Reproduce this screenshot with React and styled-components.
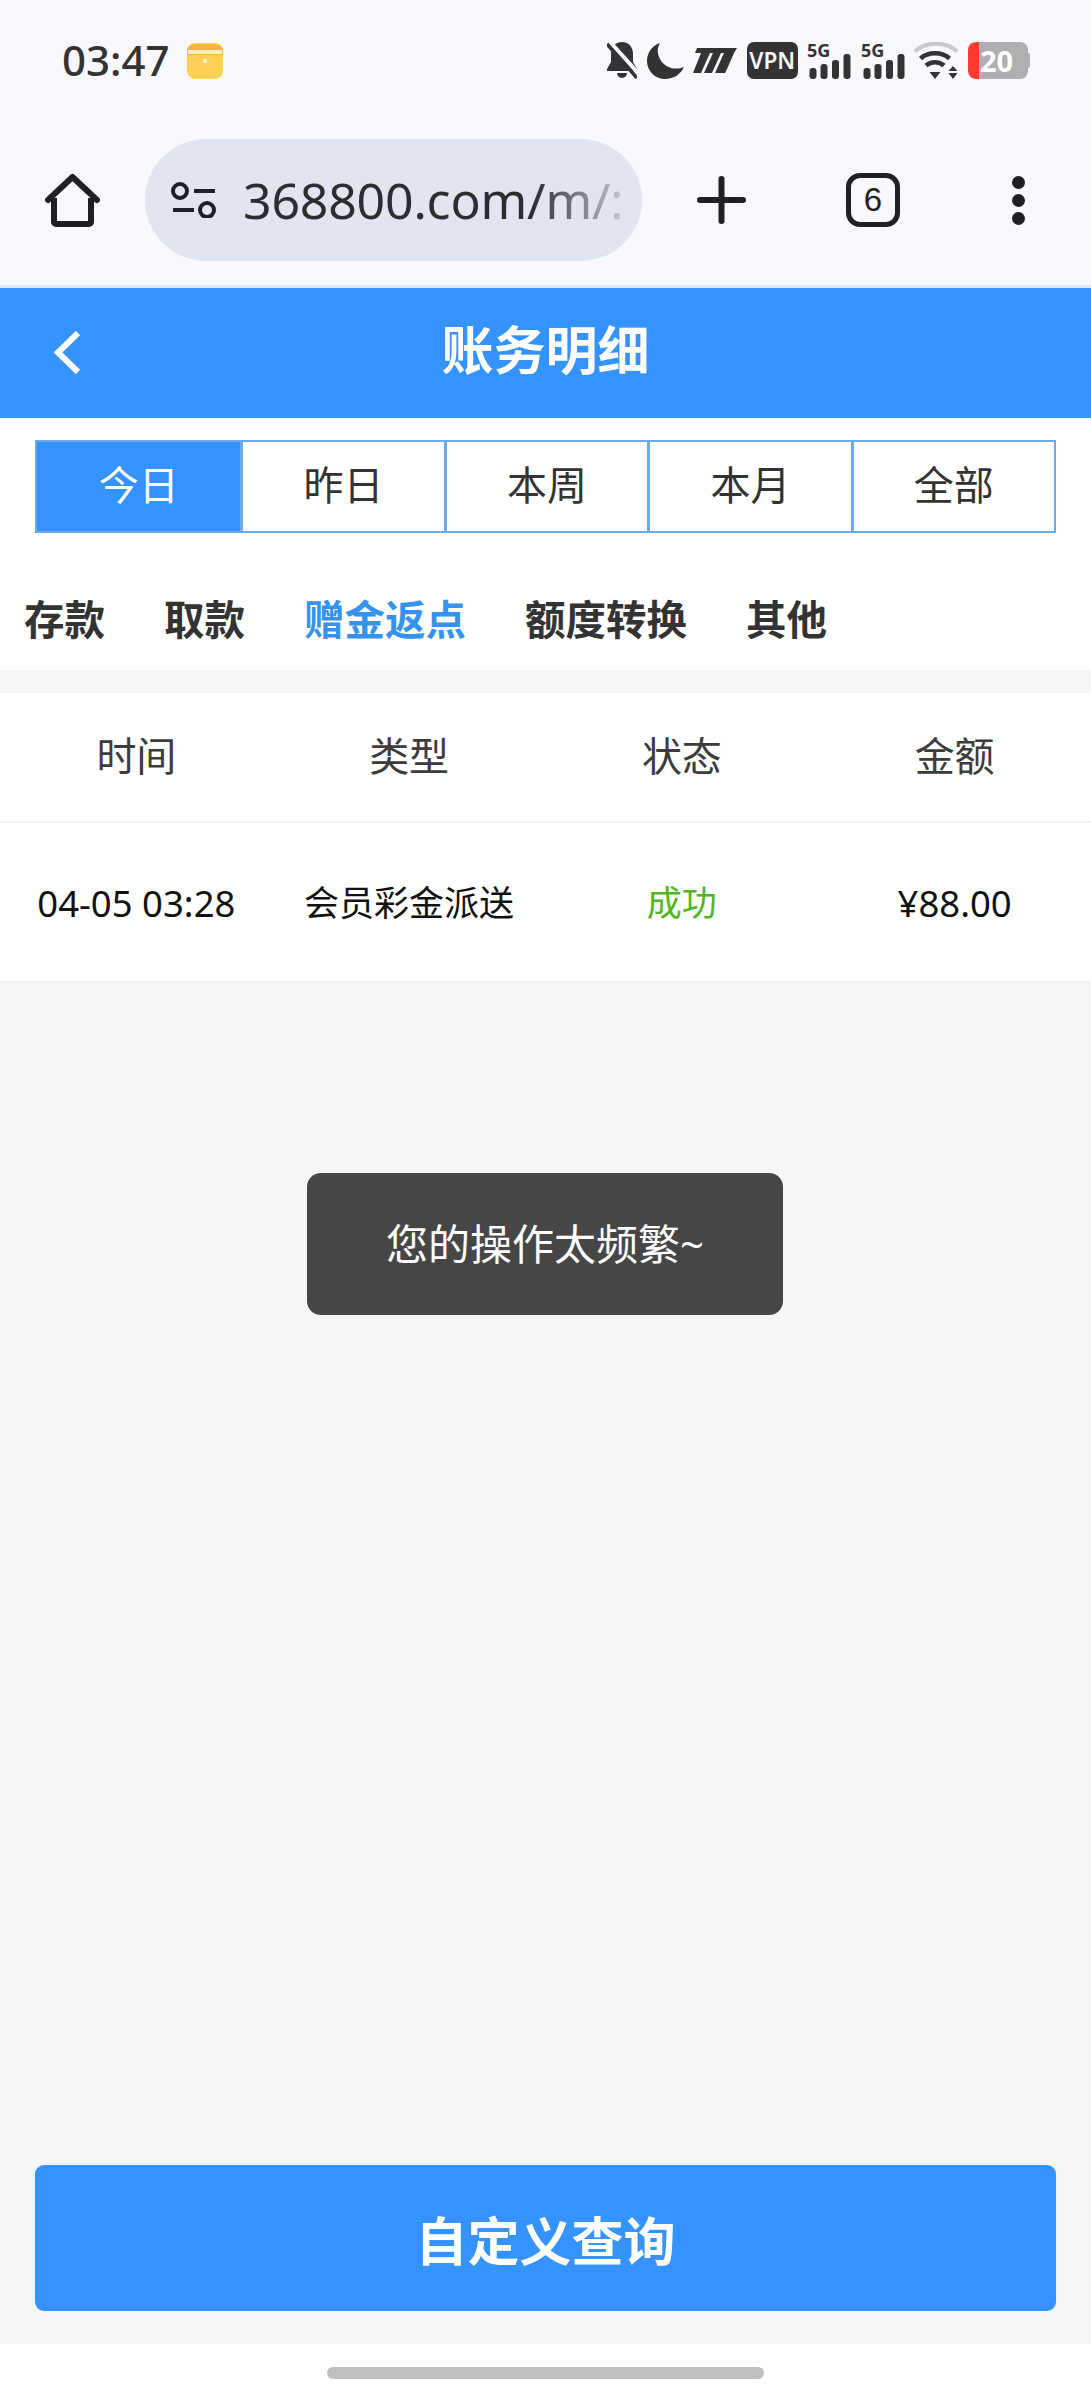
import React from "react"
import styled, { createGlobalStyle } from "styled-components"

const FONT = `"Noto Sans", "Noto Sans CJK SC", sans-serif`

const GlobalStyle = createGlobalStyle`
  html, body {
    margin: 0;
    padding: 0;
    background: #fff;
  }
  * {
    box-sizing: border-box;
  }
`

const periods = ["今日", "昨日", "本周", "本月", "全部"]
const categories = ["存款", "取款", "赠金返点", "额度转换", "其他"]
const columns = ["时间", "类型", "状态", "金额"]

const Page = styled.div`
  width: 1091px;
  height: 2400px;
  display: flex;
  flex-direction: column;
  position: relative;
  overflow: hidden;
  font-family: ${FONT};
  background: #fff;
`

const Chrome = styled.div`
  background: #f9f8fe;
  border-bottom: 3px solid #dfe7f3;
`

const StatusBar = styled.div`
  height: 121px;
  display: flex;
  align-items: center;
  padding: 0 61px 0 62px;
`

const Clock = styled.span`
  font-size: 42px;
  font-weight: 500;
  color: #333;
  line-height: 1;
  padding-bottom: 2px;
`

const NoteIcon = styled.svg`
  margin-left: 17px;
`

const StatusIcons = styled.div`
  margin-left: auto;
  display: flex;
  align-items: center;
  gap: 9.57px;
`

const VpnBadge = styled.span`
  width: 51px;
  height: 37px;
  border-radius: 7px;
  background: #333;
  color: #f9f8fe;
  font-size: 22.5px;
  font-weight: 600;
  display: flex;
  align-items: center;
  justify-content: center;
`

const Battery = styled.div`
  width: 62px;
  height: 37px;
  display: flex;
  align-items: center;
`

const BatteryBody = styled.div`
  width: 60px;
  height: 37px;
  border-radius: 8px;
  overflow: hidden;
  background: linear-gradient(to right, #ff3b30 0 11px, #b1aeb2 11px);
  color: #fff;
  font-size: 29px;
  font-weight: 700;
  line-height: 37px;
  padding-left: 12px;
`

const BatteryNub = styled.div`
  width: 2px;
  height: 15px;
  background: #b1aeb2;
  border-radius: 0 2px 2px 0;
`

const Toolbar = styled.div`
  height: 164px;
  display: flex;
  align-items: center;
  padding: 0 0 6px 45px;
`

const ToolIcon = styled.svg`
  flex: none;
  display: block;
`

const UrlPill = styled.div`
  width: 497px;
  height: 122px;
  margin: 0 55px 0 45px;
  border-radius: 61px;
  background: #e1e4f1;
  display: flex;
  align-items: center;
  padding-left: 26px;
`

const UrlText = styled.div`
  width: 381px;
  margin-left: 26px;
  white-space: nowrap;
  font-size: 50px;
  letter-spacing: -0.2px;
  color: #2c2c33;
  -webkit-mask-image: linear-gradient(to right, #000 76%, rgba(0, 0, 0, 0.5) 90%, rgba(0, 0, 0, 0.15));
  mask-image: linear-gradient(to right, #000 76%, rgba(0, 0, 0, 0.5) 90%, rgba(0, 0, 0, 0.15));
`

const TabCount = styled.div`
  width: 54px;
  height: 54px;
  margin-left: 100px;
  border: 5px solid #1f1f24;
  border-radius: 14px;
  display: flex;
  align-items: center;
  justify-content: center;
  font-family: "Liberation Sans", sans-serif;
  font-size: 33px;
  color: #1f1f24;
`

const MenuDots = styled(ToolIcon)`
  margin-left: 112px;
`

const AppHeader = styled.header`
  height: 130px;
  background: #3593ff;
  display: flex;
  align-items: center;
  justify-content: center;
  position: relative;
`

const BackIcon = styled.svg`
  position: absolute;
  left: 53px;
  top: 42px;
`

const Title = styled.h1`
  margin: 0 0 6px;
  font-size: 52px;
  line-height: 64px;
  font-weight: 700;
  color: #fff;
`

const PeriodTabs = styled.div`
  margin: 22px 35px 0 35px;
  height: 93px;
  display: grid;
  grid-template-columns: repeat(5, 1fr);
  border: 2px solid #6ea9ea;
`

const PeriodTab = styled.div`
  display: flex;
  align-items: center;
  justify-content: center;
  font-size: 40px;
  line-height: 50px;
  padding-bottom: 4px;
  color: ${({ $active }) => ($active ? "#fff" : "#333")};
  background: ${({ $active }) => ($active ? "#3593ff" : "#fff")};
  border-left: ${({ $first }) => ($first ? "none" : "3px solid #6ea9ea")};
`

const Categories = styled.div`
  height: 137px;
  padding: 62px 0 0 24px;
  display: flex;
  gap: 59px;
`

const Category = styled.span`
  font-size: 40.5px;
  line-height: 50px;
  font-weight: 700;
  color: ${({ $active }) => ($active ? "#3593ef" : "#333")};
`

const Content = styled.main`
  flex: 1;
  background: #f4f6f8;
  padding-top: 23px;
  display: flex;
  flex-direction: column;
`

const Row = styled.div`
  display: grid;
  grid-template-columns: repeat(4, 1fr);
  align-items: center;
  background: #fff;
  height: ${({ $height }) => $height}px;
  border-bottom: 2px solid #f2f2f3;
`

const HeadCell = styled.div`
  text-align: center;
  font-size: 40px;
  line-height: 50px;
  padding-bottom: 2px;
  color: #3c3c3c;
`

const Cell = styled.div`
  text-align: center;
  font-size: ${({ $number }) => ($number ? 36.5 : 35)}px;
  line-height: 46px;
  padding-top: 2px;
  color: ${({ $color }) => $color || "#111"};
`

const QueryButton = styled.button`
  margin: auto 35px 33px;
  height: 146px;
  border: none;
  border-radius: 9px;
  background: #3593ff;
  color: #fff;
  font-family: ${FONT};
  font-size: 52px;
  font-weight: 700;
`

const Toast = styled.div`
  position: absolute;
  left: 307px;
  top: 1173px;
  width: 476px;
  height: 142px;
  padding-bottom: 6px;
  border-radius: 14px;
  background: #464646;
  color: #fff;
  font-size: 42px;
  display: flex;
  align-items: center;
  justify-content: center;
`

const HomeArea = styled.div`
  height: 56px;
  display: flex;
  justify-content: center;
  padding-top: 23px;
  background: #fff;
`

const HomeBar = styled.div`
  width: 437px;
  height: 12px;
  border-radius: 6px;
  background: #bfbfbf;
`

const Note = () => (
  <NoteIcon width="36" height="36" viewBox="0 0 36 36">
    <rect width="36" height="36" rx="8" fill="#ffd257" />
    <path d="M0 9a8 8 0 0 1 8-8h20a8 8 0 0 1 8 8v3H0z" fill="#f4b63f" />
    <rect x="1" y="7" width="34" height="4" fill="#ffeeb5" />
    <rect x="16" y="16" width="4" height="4" rx="1" fill="#fff3c9" />
  </NoteIcon>
)

const BellOff = () => (
  <svg width="30" height="37" viewBox="0 0 30 37">
    <path d="M15 0c7 0 11 5 11 12v8l4 7v2H0v-2l4-7v-8C4 5 8 0 15 0z" fill="#333" />
    <path d="M10 31h10a5 5 0 0 1-10 0z" fill="#333" />
    <path d="M3 0 33 33" stroke="#f9f8fe" strokeWidth="4" />
    <path d="M0 2 30 36" stroke="#333" strokeWidth="3.500" />
  </svg>
)

const Moon = () => (
  <svg width="37" height="37" viewBox="0 0 37 37">
    <path d="M13 1C4 4 0 12 0 19c0 10 8 18 18 18 9 0 16-5 19-12-10 4-20 0-24-8-3-6-3-11 0-16z" fill="#333" />
  </svg>
)

const MiLogo = () => (
  <svg width="44" height="25" viewBox="0 0 44 25" fill="#333">
    <path d="M4 0H44L41 5H2z" />
    <path d="M8 5H17L8 25H0z" />
    <path d="M20 5H28L19 25H11z" />
    <path d="M31 5H41L34 21 32 25H22z" />
  </svg>
)

const Signal = () => (
  <svg width="44" height="37" viewBox="0 0 44 37" fill="#333" overflow="visible">
    <text x="0" y="15" fontFamily="Noto Sans, sans-serif" fontSize="18" fontWeight="700">5G</text>
    <rect x="2.500" y="26" width="7" height="11" rx="3" />
    <rect x="13.500" y="22" width="7" height="15" rx="3" />
    <rect x="25" y="18" width="7" height="19" rx="3" />
    <rect x="36.500" y="12" width="7" height="25" rx="3" />
  </svg>
)

const Wifi = () => (
  <svg width="44" height="37" viewBox="0 0 44 37" fill="none">
    <path d="M1 9.500C12-1 32-1 43 9.500" stroke="#c9c8cc" strokeWidth="4" />
    <path d="M6.500 16.500C14 9.500 28 9.500 35.500 16.500" stroke="#333" strokeWidth="4.500" />
    <path d="M12 23.500C17 19 25 19 30 23.500" stroke="#333" strokeWidth="4.500" />
    <path d="M15.500 30h11L21 37z" fill="#333" />
    <path d="M34.500 29h9L39 24zM34.500 31h9L39 37z" fill="#333" />
  </svg>
)

const App = () => (
  <Page>
    <GlobalStyle />
    <Chrome>
      <StatusBar>
        <Clock>03:47</Clock>
        <Note />
        <StatusIcons>
          <BellOff />
          <Moon />
          <MiLogo />
          <VpnBadge>VPN</VpnBadge>
          <Signal />
          <Signal />
          <Wifi />
          <Battery>
            <BatteryBody>20</BatteryBody>
            <BatteryNub />
          </Battery>
        </StatusIcons>
      </StatusBar>
      <Toolbar>
        <ToolIcon width="55" height="54" viewBox="0 0 55 54" fill="none">
          <path d="M3 27 27.500 4 52 27" stroke="#1f1f24" strokeWidth="6" strokeLinecap="round" strokeLinejoin="round" />
          <path d="M9 25v24a2 2 0 0 0 2 2h33a2 2 0 0 0 2-2V25" stroke="#1f1f24" strokeWidth="6" strokeLinejoin="round" />
        </ToolIcon>
        <UrlPill>
          <ToolIcon width="46" height="36" viewBox="0 0 46 36" fill="none">
            <circle cx="9" cy="9" r="7" stroke="#1f1f2b" strokeWidth="4" />
            <path d="M23 9h21M2 28h21" stroke="#1f1f2b" strokeWidth="4" />
            <circle cx="36" cy="28" r="7" stroke="#1f1f2b" strokeWidth="4" />
          </ToolIcon>
          <UrlText>368800.com/m/:</UrlText>
        </UrlPill>
        <ToolIcon width="49" height="48" viewBox="0 0 49 48">
          <path d="M24.500 3v42M3 24h43" stroke="#1f1f24" strokeWidth="6" strokeLinecap="round" />
        </ToolIcon>
        <TabCount>6</TabCount>
        <MenuDots width="13" height="49" viewBox="0 0 13 49">
          <circle cx="6.500" cy="6.500" r="6.500" fill="#1f1f24" />
          <circle cx="6.500" cy="24.500" r="6.500" fill="#1f1f24" />
          <circle cx="6.500" cy="42.500" r="6.500" fill="#1f1f24" />
        </MenuDots>
      </Toolbar>
    </Chrome>
    <AppHeader>
      <BackIcon width="28" height="45" viewBox="0 0 28 45" fill="none">
        <path d="M25 3 5 22.500 25 42" stroke="#fff" strokeWidth="6" />
      </BackIcon>
      <Title>账务明细</Title>
    </AppHeader>
    <PeriodTabs>
      {periods.map((name, key) => (
        <PeriodTab key={key} $active={key === 0} $first={key === 0}>
          {name}
        </PeriodTab>
      ))}
    </PeriodTabs>
    <Categories>
      {categories.map((name, key) => (
        <Category key={key} $active={key === 2}>
          {name}
        </Category>
      ))}
    </Categories>
    <Content>
      <Row $height={130}>
        {columns.map((name, key) => (
          <HeadCell key={key}>{name}</HeadCell>
        ))}
      </Row>
      <Row $height={160}>
        <Cell $number>04-05 03:28</Cell>
        <Cell>会员彩金派送</Cell>
        <Cell $color="#52b620">成功</Cell>
        <Cell $number>¥88.00</Cell>
      </Row>
      <QueryButton>自定义查询</QueryButton>
    </Content>
    <Toast>您的操作太频繁~</Toast>
    <HomeArea>
      <HomeBar />
    </HomeArea>
  </Page>
)

export default App
